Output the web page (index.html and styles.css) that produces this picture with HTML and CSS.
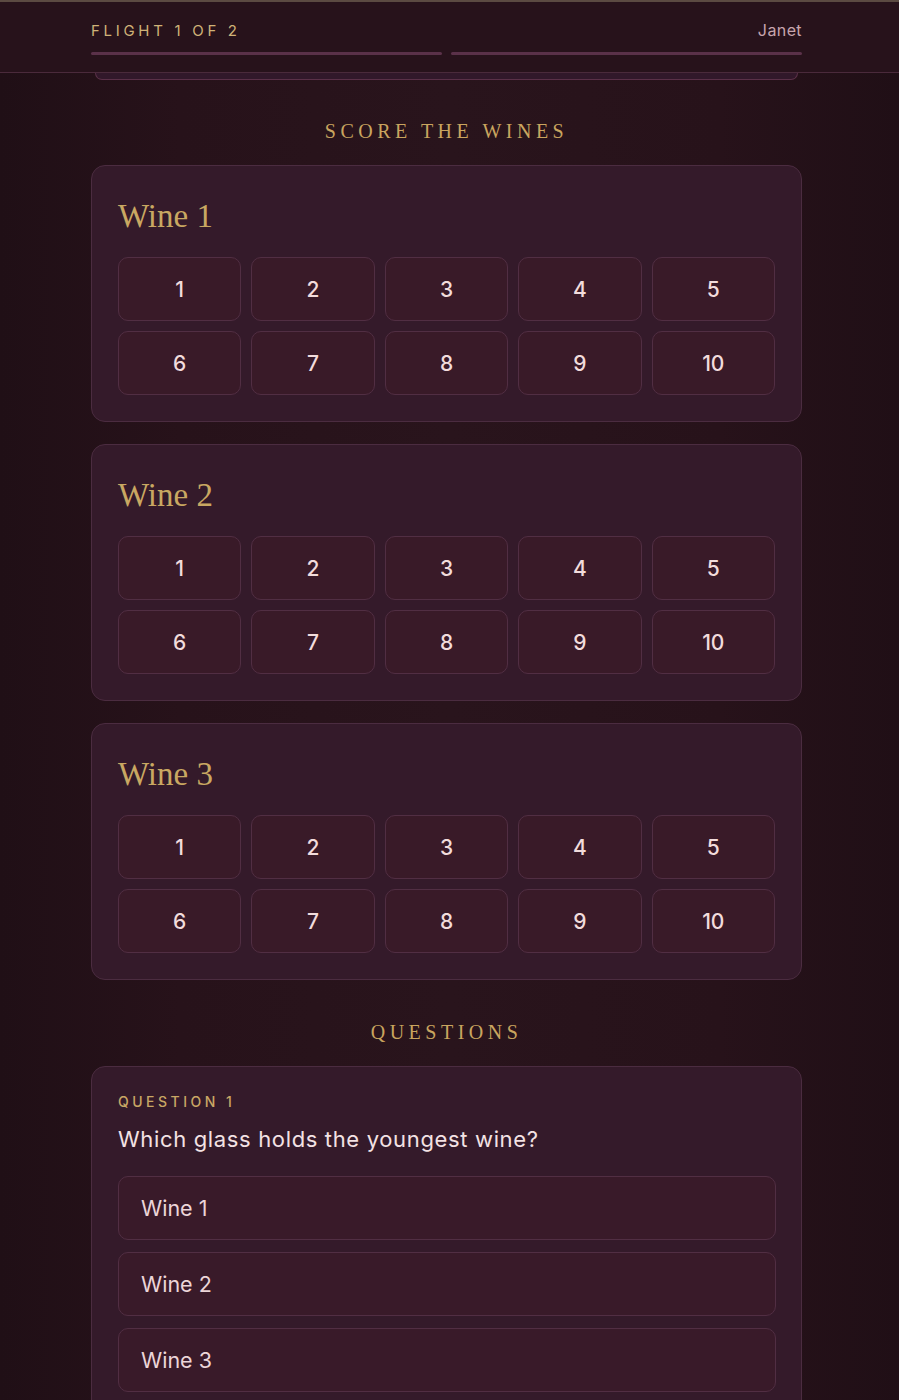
FILE: index.html
```html
<!DOCTYPE html>
<html lang="en">
<head>
<meta charset="utf-8">
<title>Score the wines</title>
<link rel="stylesheet" href="styles.css">
</head>
<body>
<div class="topline"></div>
<header class="bar">
  <div class="wrap">
    <div class="bar-row">
      <span class="flight">FLIGHT 1 OF 2</span>
      <span class="user">Janet</span>
    </div>
    <div class="progress">
      <span class="seg"></span>
      <span class="seg"></span>
    </div>
  </div>
</header>
<main class="wrap">
  <div class="peek"></div>

  <h2 class="section-title first">SCORE THE WINES</h2>

  <section class="card wine">
    <h3 class="wine-name">Wine 1</h3>
    <div class="scores">
      <button class="score">1</button><button class="score">2</button><button class="score">3</button><button class="score">4</button><button class="score">5</button>
      <button class="score">6</button><button class="score">7</button><button class="score">8</button><button class="score">9</button><button class="score">10</button>
    </div>
  </section>

  <section class="card wine">
    <h3 class="wine-name">Wine 2</h3>
    <div class="scores">
      <button class="score">1</button><button class="score">2</button><button class="score">3</button><button class="score">4</button><button class="score">5</button>
      <button class="score">6</button><button class="score">7</button><button class="score">8</button><button class="score">9</button><button class="score">10</button>
    </div>
  </section>

  <section class="card wine">
    <h3 class="wine-name">Wine 3</h3>
    <div class="scores">
      <button class="score">1</button><button class="score">2</button><button class="score">3</button><button class="score">4</button><button class="score">5</button>
      <button class="score">6</button><button class="score">7</button><button class="score">8</button><button class="score">9</button><button class="score">10</button>
    </div>
  </section>

  <h2 class="section-title second">QUESTIONS</h2>

  <section class="card question">
    <div class="q-label">QUESTION 1</div>
    <p class="q-text">Which glass holds the youngest wine?</p>
    <div class="options">
      <button class="option">Wine 1</button>
      <button class="option">Wine 2</button>
      <button class="option">Wine 3</button>
    </div>
  </section>
</main>
</body>
</html>
```
FILE: styles.css
```css
* { box-sizing: border-box; }

html, body {
  margin: 0;
  padding: 0;
}

body {
  background: linear-gradient(90deg, #200f16 0%, #27121a 20%, #29141c 50%, #27121a 80%, #200f16 100%);
  font-family: Inter, "Open Sans", "DejaVu Sans", sans-serif;
  color: #f2dcdc;
  min-height: 1400px;
}

.wrap {
  width: 711px;
  margin-left: 91px;
}

.topline {
  height: 2px;
  background: #5b4a42;
}

.bar {
  background: #27121b;
  border-bottom: 1px solid #4a2a3b;
  padding-top: 20px;
  height: 71px;
}

.bar-row {
  display: flex;
  justify-content: space-between;
  align-items: baseline;
  line-height: 17px;
}

.flight {
  font-size: 15px;
  letter-spacing: 3.7px;
  color: #cfb278;
  font-weight: 400;
}

.user {
  font-size: 16px;
  letter-spacing: 0.4px;
  color: #c7a5ae;
}

.progress {
  display: flex;
  gap: 9px;
  margin-top: 13px;
}

.seg {
  flex: 1;
  height: 3px;
  border-radius: 2px;
  background: #5a3149;
}

.peek {
  height: 7px;
  margin: 0 4px;
  background: #31182a;
  border: 1px solid #5a3048;
  border-top: none;
  border-radius: 0 0 10px 10px;
}

.section-title {
  margin: 0;
  text-align: center;
  font-family: "Liberation Serif", "DejaVu Serif", serif;
  font-weight: 400;
  font-size: 20px;
  line-height: 24px;
  letter-spacing: 4.5px;
  color: #c9a55f;
}

.section-title.first {
  margin: 39px 0 22px;
}

.section-title.second {
  margin: 40px 0 22px;
}

.card {
  background: #341a2a;
  border: 1px solid #4b2c40;
  border-radius: 14px;
}

.wine {
  padding: 26px 26px 26px;
  margin-bottom: 22px;
}

.wine:last-of-type {
  margin-bottom: 0;
}

.wine-name {
  margin: 0 0 17px;
  font-family: "Liberation Serif", "DejaVu Serif", serif;
  font-weight: 400;
  font-size: 33px;
  line-height: 48px;
  color: #c9a862;
}

.scores {
  display: grid;
  grid-template-columns: repeat(5, 1fr);
  gap: 10px;
}

.score {
  height: 64px;
  margin: 0;
  padding: 0;
  background: #391a28;
  border: 1px solid #512e43;
  border-radius: 10px;
  font-family: Inter, "Open Sans", "DejaVu Sans", sans-serif;
  font-size: 21px;
  font-weight: 500;
  color: #f2dcdc;
}

.question {
  padding: 26px 25px 26px 26px;
}

.q-label {
  font-size: 14px;
  line-height: 17px;
  letter-spacing: 3.5px;
  font-weight: 500;
  color: #c9a765;
}

.q-text {
  margin: 14px 0 22px;
  font-size: 22px;
  line-height: 30px;
  letter-spacing: 0.65px;
  color: #f3e2e4;
}

.options {
  display: flex;
  flex-direction: column;
  gap: 12px;
}

.option {
  height: 64px;
  margin: 0;
  padding: 0 22px;
  text-align: left;
  background: #391a29;
  border: 1px solid #512e43;
  border-radius: 10px;
  font-family: Inter, "Open Sans", "DejaVu Sans", sans-serif;
  font-size: 21.5px;
  color: #ecd5d8;
}
```
